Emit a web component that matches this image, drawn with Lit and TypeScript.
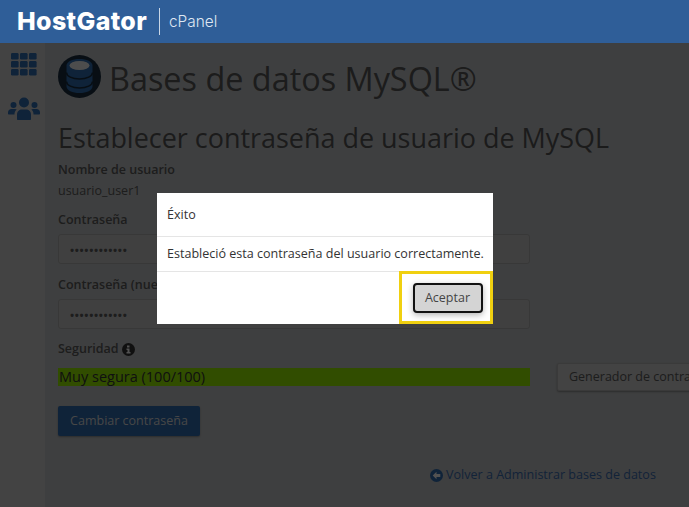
import { LitElement, html, svg, css } from "lit";
import { customElement } from "lit/decorators.js";

@customElement("app-root")
export class AppRoot extends LitElement {
  static styles = css`
    :host { display: block; width: 689px; height: 507px; overflow: hidden; position: relative; font-family: "Open Sans", sans-serif; color: #5a5a5a; background: #c8c8c8; }
    * { box-sizing: border-box; }
    header { height: 43px; background: #2f5e98; display: flex; align-items: center; padding-left: 17px; color: #fff; position: relative; z-index: 3; }
    .brand { font-family: Inter, sans-serif; font-weight: 800; font-size: 25px; letter-spacing: 0.35px; line-height: 1; width: 142px; white-space: nowrap; }
    .sep { width: 1px; height: 27px; background: #c9d6e6; margin-right: 9px; }
    .cp { font-family: Inter, sans-serif; font-weight: 300; font-size: 15.4px; color: #dfe7f2; }
    .body { display: flex; height: 464px; }
    aside { width: 45px; background: #d1d1d1; display: flex; flex-direction: column; align-items: center; padding: 10px 0 0 2px; gap: 21px; flex: none; }
    aside svg { display: block; }
    main { flex: 1; padding: 10px 0 0 13px; min-width: 0; background: #c2c4c6; }
    .title { display: flex; align-items: center; height: 50px; gap: 8px; }
    .title svg { align-self: flex-start; margin-top: 2px; flex: none; }
    .title h1 { font-weight: 400; font-size: 32.4px; margin: 0; line-height: 50px; color: #585858; white-space: nowrap; }
    h2 { font-weight: 400; font-size: 26.95px; line-height: 36px; margin: 17px 0 0; white-space: nowrap; color: #565656; }
    .label { font-weight: 600; font-size: 12.5px; line-height: 18px; white-space: nowrap; display: flex; align-items: center; gap: 3px; }
    .l1 { margin-top: 5px; }
    .val { font-size: 12.5px; line-height: 18px; margin-top: 3px; }
    .l2 { margin-top: 11px; }
    .input { width: 472px; height: 30px; border: 1px solid #aeaeae; border-radius: 3px; background: #c8c8c8; margin-top: 5px; padding-left: 11px; display: flex; align-items: center; font-size: 11px; letter-spacing: 0.65px; font-weight: 700; }
    .l3 { margin-top: 12px; }
    .l4 { margin-top: 11px; }
    .strength { display: flex; align-items: center; margin-top: 5px; height: 28px; }
    .bar { width: 472px; height: 18px; background: #98f000; font-size: 14.5px; line-height: 17px; padding-left: 1px; white-space: nowrap; flex: none; margin-top: -1px; color: #333; }
    .gen { margin-left: 27px; flex: none; width: 170px; height: 28px; border: 1px solid #b4b4b4; background: #cfcfcf; border-radius: 2px; font-size: 12.5px; line-height: 26px; padding-left: 11px; white-space: nowrap; box-shadow: 0 1px 2px rgba(0, 0, 0, 0.3); }
    .submit { margin-top: 15px; width: 142px; height: 30px; background: #2f6cb0; border-radius: 2px; color: #dcdcdc; font-size: 12.5px; line-height: 30px; text-align: center; white-space: nowrap; box-shadow: 0 1px 2px rgba(0, 0, 0, 0.3); }
    .back { display: flex; align-items: center; gap: 3px; margin: 30px 0 0 372px; font-size: 12.55px; line-height: 18px; color: #3a6cb0; white-space: nowrap; }
    .overlay { position: absolute; inset: 43px 0 0 0; background: rgba(0, 0, 0, 0.68); z-index: 2; }
    .modal { position: absolute; left: 157px; top: 193px; width: 336px; height: 131px; background: #fff; z-index: 4; font-size: 12.55px; color: #333; display: flex; flex-direction: column; }
    .m-h { height: 44px; line-height: 43px; padding-left: 10px; border-bottom: 1px solid #e5e5e5; }
    .m-b { height: 35px; line-height: 33px; padding-left: 10px; border-bottom: 1px solid #e5e5e5; white-space: nowrap; }
    .m-f { flex: 1; display: flex; justify-content: flex-end; }
    .hl { width: 94px; height: 53px; margin-top: -1px; border: 3px solid #f0d010; display: flex; align-items: center; justify-content: center; padding-left: 3px; }
    .ok { width: 70px; height: 30px; background: #d4d4d4; border: 2px solid #111; border-radius: 4px; font-size: 12.5px; line-height: 26px; text-align: center; color: #444; box-shadow: 0 2px 6px rgba(0, 0, 0, 0.3); }
  `;

  render() {
    return html`
      <header>
        <div class="brand">HostGator</div>
        <div class="sep"></div>
        <div class="cp">cPanel</div>
      </header>
      <div class="body">
        <aside>
          <svg width="26" height="23" viewBox="0 0 26 23">
            ${[0, 9, 18].map((x) =>
              [0, 8, 16].map(
                (y) => svg`<rect x=${x} y=${y} width="7.6" height="6.6" rx="1.3" fill="#2f6cb0"></rect>`
              )
            )}
          </svg>
          <svg width="32" height="23" viewBox="0 0 32 23" fill="#2f6cb0">
            <circle cx="16" cy="5.5" r="5"></circle>
            <circle cx="5.5" cy="8" r="3"></circle>
            <circle cx="26.5" cy="8" r="3"></circle>
            <path d="M9 22v-4.5c0-3 2.2-5 5-5h4c2.8 0 5 2 5 5V22c0 .6-.4 1-1 1H10c-.6 0-1-.4-1-1z"></path>
            <path d="M0 15.500c0-2 1.500-3.500 3.500-3.500H7c.6 0 1.200.2 1.700.5C6.700 14 6.500 16 6.500 17.500H1c-.6 0-1-.4-1-1z"></path>
            <path d="M32 15.500c0-2-1.500-3.500-3.500-3.500H25c-.6 0-1.200.2-1.700.5 2 1.500 2.200 3.500 2.200 5H31c.6 0 1-.4 1-1z"></path>
          </svg>
        </aside>
        <main>
          <div class="title">
            <svg width="43" height="43" viewBox="0 0 43 43">
              <circle cx="21.5" cy="21.5" r="21.5" fill="#192d3e"></circle>
              <path d="M8.500 10.500v21c0 3.800 5.800 6.500 13 6.500s13-2.700 13-6.500v-21c0-3.800-5.800-6.500-13-6.500s-13 2.700-13 6.500z" fill="#2f6cb0"></path>
              <ellipse cx="21.500" cy="10.500" rx="10" ry="4.500" fill="#f0f0f0"></ellipse>
              <path d="M8.500 17.500c0 3.800 5.800 6.500 13 6.500s13-2.700 13-6.500M8.500 26.500c0 3.800 5.800 6.500 13 6.500s13-2.700 13-6.500" fill="none" stroke="#192d3e" stroke-width="1.500"></path>
            </svg>
            <h1>Bases de datos MySQL®</h1>
          </div>
          <h2>Establecer contraseña de usuario de MySQL</h2>
          <div class="label l1">Nombre de usuario</div>
          <div class="val">usuario_user1</div>
          <div class="label l2">Contraseña</div>
          <div class="input">••••••••••••</div>
          <div class="label l3">Contraseña (nuevamente)</div>
          <div class="input">••••••••••••</div>
          <div class="label l4">
            Seguridad
            <svg width="13" height="13" viewBox="0 0 13 13">
              <circle cx="6.500" cy="6.500" r="6.500" fill="#333"></circle>
              <path d="M5 2.500h2.500v2H5zM4.500 5.500h3v3.500h1v1.500h-4V9h1V7h-1z" fill="#fff"></path>
            </svg>
          </div>
          <div class="strength">
            <div class="bar">Muy segura (100/100)</div>
            <div class="gen">Generador de contraseñas</div>
          </div>
          <div class="submit">Cambiar contraseña</div>
          <div class="back">
            <svg width="13" height="13" viewBox="0 0 13 13">
              <circle cx="6.500" cy="6.500" r="6.500" fill="#2f6cb0"></circle>
              <path d="M6.500 2.700 2.700 6.500l3.800 3.800V8H10.300V5H6.500z" fill="#fff"></path>
            </svg>
            Volver a Administrar bases de datos
          </div>
        </main>
      </div>
      <div class="overlay"></div>
      <div class="modal">
        <div class="m-h">Éxito</div>
        <div class="m-b">Estableció esta contraseña del usuario correctamente.</div>
        <div class="m-f">
          <div class="hl"><div class="ok">Aceptar</div></div>
        </div>
      </div>
    `;
  }
}
